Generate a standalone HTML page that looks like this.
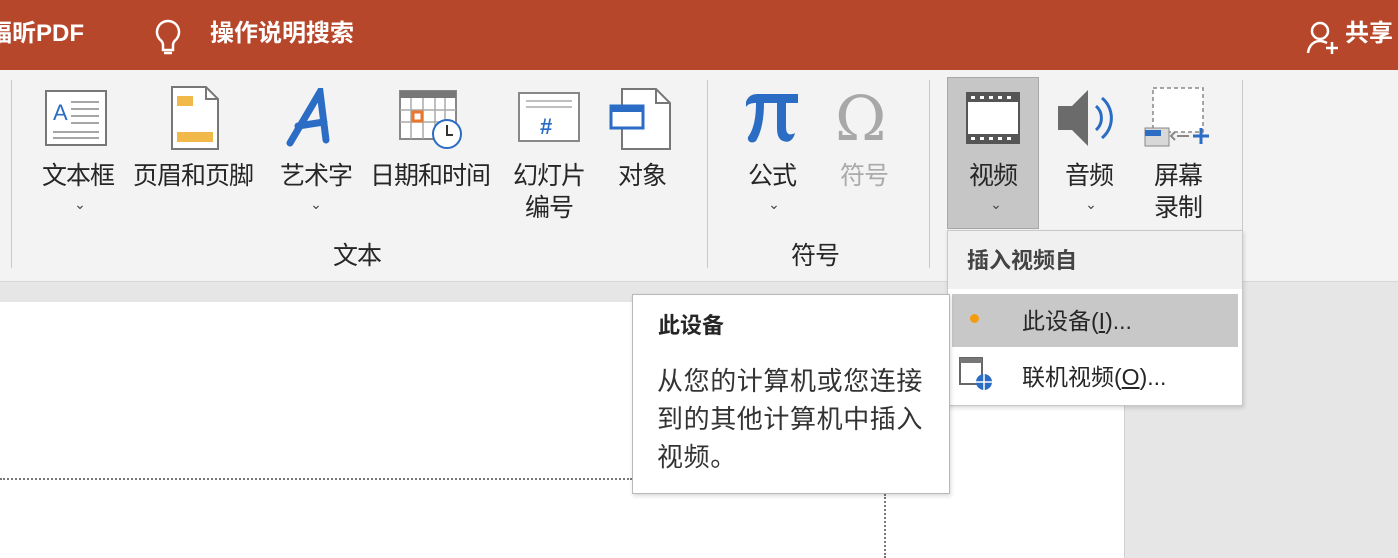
<!DOCTYPE html>
<html><head><meta charset="utf-8"><style>
*{margin:0;padding:0;box-sizing:border-box}
body{width:1398px;height:558px;overflow:hidden;position:relative;background:#e6e6e6;font-family:"Liberation Sans","Noto Sans CJK SC",sans-serif;color:#262626}
.a{position:absolute}
.t{position:absolute;font-size:25px;line-height:32px;white-space:nowrap;transform:translateX(-50%);text-align:center;letter-spacing:-1px}
.ch{position:absolute;font-size:14px;color:#444;transform:translateX(-50%)}
.sep{position:absolute;top:80px;width:1px;height:188px;background:#c8c8c8}
</style></head><body>
<div class="a" style="left:0;top:0;width:1398px;height:70px;background:#b7472a"></div>
<div class="a" style="left:-12px;top:18px;color:#fff;font-size:24px;font-weight:bold;line-height:32px">福昕PDF</div>
<svg class="a" style="left:152px;top:18px" width="32" height="40" viewBox="0 0 32 40"><path d="M16 3a11 11 0 0 0-7 19.5c1.5 1.5 2 3 2 5V32h10v-4.5c0-2 .5-3.5 2-5A11 11 0 0 0 16 3z M12 35h8" fill="none" stroke="#fff" stroke-width="2.5"/></svg>
<div class="a" style="left:210px;top:18px;color:#fff;font-size:24px;font-weight:bold;line-height:32px">操作说明搜索</div>
<svg class="a" style="left:1305px;top:20px" width="36" height="36" viewBox="0 0 36 36"><circle cx="15" cy="11" r="8" fill="none" stroke="#fff" stroke-width="2.5"/><path d="M3 33c1-8 6-12 12-12 3 0 5 1 7 2" fill="none" stroke="#fff" stroke-width="2.5"/><path d="M27 22v12M21 28h12" stroke="#fff" stroke-width="2.5"/></svg>
<div class="a" style="left:1345px;top:18px;color:#fff;font-size:24px;font-weight:bold;line-height:32px">共享</div>

<div class="a" style="left:0;top:70px;width:1398px;height:212px;background:#f3f3f3;border-bottom:1px solid #d6d6d6"></div>
<div class="sep" style="left:11px"></div><div class="sep" style="left:707px"></div><div class="sep" style="left:929px"></div><div class="sep" style="left:1242px"></div>

<div class="a" style="left:0;top:302px;width:1125px;height:256px;background:#fff;border-right:1px solid #d0d0d0"></div>
<div class="a" style="left:0;top:478px;width:632px;border-top:2px dotted #777"></div>
<div class="a" style="left:884px;top:494px;height:64px;border-left:2px dotted #777"></div>

<svg class="a" style="left:45px;top:90px" width="62" height="56"><rect x="1" y="1" width="60" height="54" fill="#fff" stroke="#777" stroke-width="2"/><text x="8" y="30" font-size="22" fill="#2b6cc4" font-family="Liberation Sans">A</text><path d="M26 12h28M26 19h28M26 26h28M26 33h28M8 42h46M8 48h46" stroke="#888" stroke-width="1.5"/></svg>
<svg class="a" style="left:171px;top:86px" width="48" height="64"><path d="M1 1h34l12 12v50H1z" fill="#fff" stroke="#777" stroke-width="2"/><path d="M35 1v12h12" fill="none" stroke="#777" stroke-width="2"/><rect x="6" y="10" width="16" height="10" fill="#f0b94a"/><rect x="6" y="46" width="36" height="10" fill="#f0b94a"/></svg>
<svg class="a" style="left:286px;top:88px" width="50" height="60"><path d="M4 55 L34 4 L40 52 M12 38 L38 34" fill="none" stroke="#2b6cc4" stroke-width="7" stroke-linecap="round"/></svg>
<svg class="a" style="left:399px;top:90px" width="66" height="60"><rect x="1" y="1" width="56" height="48" fill="#fff" stroke="#888" stroke-width="2"/><rect x="1" y="1" width="56" height="7" fill="#777"/><path d="M12 8v41M24 8v41M36 8v41M46 8v41M1 20h56M1 32h56" stroke="#aaa" stroke-width="1.5"/><rect x="14" y="22" width="9" height="9" fill="none" stroke="#e8762c" stroke-width="3"/><circle cx="48" cy="44" r="14" fill="#fff" stroke="#2b6cc4" stroke-width="2"/><path d="M48 35v10h6" fill="none" stroke="#333" stroke-width="2"/></svg>
<svg class="a" style="left:518px;top:92px" width="64" height="52"><rect x="1" y="1" width="60" height="48" fill="#fff" stroke="#888" stroke-width="2"/><path d="M8 9h46M8 15h46" stroke="#999" stroke-width="1.2"/><text x="22" y="42" font-size="22" font-weight="bold" fill="#2b6cc4" font-family="Liberation Sans">#</text></svg>
<svg class="a" style="left:608px;top:88px" width="64" height="62"><path d="M14 1h34l14 14v46H14z" fill="#fff" stroke="#777" stroke-width="2"/><path d="M48 1v14h14" fill="none" stroke="#777" stroke-width="2"/><rect x="3" y="18" width="32" height="22" fill="#fff" stroke="#2b6cc4" stroke-width="3"/><rect x="3" y="18" width="32" height="6" fill="#2b6cc4"/></svg>
<svg class="a" style="left:742px;top:90px" width="60" height="56"><path d="M4 12c2-6 6-8 12-8h40v9H44v24c0 7 3 9 9 6-2 8-7 10-12 8-5-2-6-7-6-14V13H22c0 14-2 28-8 38-4 3-9 1-8-4 6-8 8-20 8-34-5 0-8 1-10 4z" fill="#2b6cc4"/></svg>
<div class="a" style="left:835px;top:76px;font-size:62px;color:#a8a8a8;font-family:'DejaVu Serif',serif;line-height:86px">Ω</div>

<div class="a" style="left:947px;top:77px;width:92px;height:152px;background:#c6c6c6;border:1px solid #a8a8a8"></div>
<svg class="a" style="left:966px;top:92px" width="54" height="52"><rect x="1" y="1" width="52" height="50" fill="#fff" stroke="#555" stroke-width="2"/><rect x="1" y="1" width="52" height="9" fill="#555"/><rect x="1" y="42" width="52" height="9" fill="#555"/><g fill="#fff"><rect x="5" y="4" width="4" height="3"/><rect x="14" y="4" width="4" height="3"/><rect x="23" y="4" width="4" height="3"/><rect x="32" y="4" width="4" height="3"/><rect x="41" y="4" width="4" height="3"/><rect x="5" y="45" width="4" height="3"/><rect x="14" y="45" width="4" height="3"/><rect x="23" y="45" width="4" height="3"/><rect x="32" y="45" width="4" height="3"/><rect x="41" y="45" width="4" height="3"/></g></svg>
<svg class="a" style="left:1056px;top:88px" width="60" height="60"><path d="M2 18h14L32 2v56L16 42H2z" fill="#6b6b6b"/><path d="M40 18a16 16 0 0 1 0 24M46 10a26 26 0 0 1 0 40" fill="none" stroke="#2b6cc4" stroke-width="3"/></svg>
<svg class="a" style="left:1143px;top:86px" width="70" height="66"><rect x="10" y="2" width="50" height="44" fill="#fff" stroke="#888" stroke-width="1.5" stroke-dasharray="4 3"/><rect x="2" y="42" width="24" height="18" fill="#d8d8d8" stroke="#888"/><rect x="2" y="44" width="16" height="6" fill="#2b6cc4"/><path d="M32 46l-4 4 4 4M34 50h12" stroke="#888" stroke-width="2" fill="none"/><path d="M58 42v16M50 50h16" stroke="#2b6cc4" stroke-width="3"/></svg>

<div class="t" style="left:78px;top:160px">文本框</div><div class="ch" style="left:80px;top:196px">⌄</div>
<div class="t" style="left:193px;top:160px">页眉和页脚</div>
<div class="t" style="left:316px;top:160px">艺术字</div><div class="ch" style="left:316px;top:196px">⌄</div>
<div class="t" style="left:430px;top:160px">日期和时间</div>
<div class="t" style="left:549px;top:160px">幻灯片<br>编号</div>
<div class="t" style="left:642px;top:160px">对象</div>
<div class="t" style="left:772px;top:160px">公式</div><div class="ch" style="left:774px;top:196px">⌄</div>
<div class="t" style="left:864px;top:160px;color:#aaa">符号</div>
<div class="t" style="left:993px;top:160px">视频</div><div class="ch" style="left:996px;top:196px">⌄</div>
<div class="t" style="left:1089px;top:160px">音频</div><div class="ch" style="left:1091px;top:196px">⌄</div>
<div class="t" style="left:1178px;top:160px">屏幕<br>录制</div>
<div class="t" style="left:357px;top:240px">文本</div>
<div class="t" style="left:815px;top:240px">符号</div>

<div class="a" style="left:947px;top:230px;width:296px;height:176px;background:#fff;border:1px solid #c8c8c8;box-shadow:1px 2px 4px rgba(0,0,0,.15)"></div>
<div class="a" style="left:948px;top:231px;width:294px;height:58px;background:#f0f0f0"></div>
<div class="a" style="left:967px;top:246px;font-size:22px;font-weight:bold;color:#444;line-height:30px">插入视频自</div>
<div class="a" style="left:952px;top:294px;width:286px;height:53px;background:#c8c8c8"></div>
<div class="a" style="left:970px;top:314px;width:9px;height:9px;border-radius:50%;background:#f39c12"></div>
<div class="a" style="left:1022px;top:306px;font-size:23px;line-height:30px">此设备(<u>I</u>)...</div>
<svg class="a" style="left:958px;top:356px" width="40" height="36"><rect x="2" y="2" width="22" height="26" fill="#fff" stroke="#666" stroke-width="2"/><rect x="2" y="2" width="22" height="5" fill="#777"/><circle cx="26" cy="26" r="8" fill="#2b6cc4"/><path d="M18 26h16M26 18v16" stroke="#fff" stroke-width="1.5"/></svg>
<div class="a" style="left:1022px;top:362px;font-size:23px;line-height:30px">联机视频(<u>O</u>)...</div>

<div class="a" style="left:632px;top:294px;width:318px;height:200px;background:#fff;border:1px solid #b8b8b8;box-shadow:1px 2px 4px rgba(0,0,0,.15)"></div>
<div class="a" style="left:658px;top:311px;font-size:22px;font-weight:bold;line-height:30px">此设备</div>
<div class="a" style="left:657px;top:362px;font-size:26px;line-height:38px;color:#333;white-space:nowrap;letter-spacing:0.6px">从您的计算机或您连接<br>到的其他计算机中插入<br>视频。</div>
</body></html>
